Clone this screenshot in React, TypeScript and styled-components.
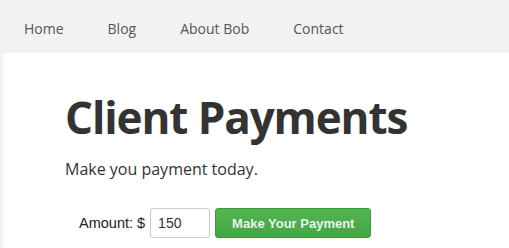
import React from "react"
import styled, { createGlobalStyle } from "styled-components"

const GlobalStyle = createGlobalStyle`
    html, body {
        margin: 0;
        padding: 0;
        background: #f2f2f2;
    }
    body {
        font-family: "Open Sans", "Liberation Sans", sans-serif;
    }
`

const links = ["Home", "Blog", "About Bob", "Contact"]

export default function App() {
    return (
        <>
            <GlobalStyle />
            <Page>
                <Nav>
                    {links.map((l) => (
                        <NavLink key={l} href="#">{l}</NavLink>
                    ))}
                </Nav>
                <Main>
                    <Title>Client Payments</Title>
                    <Lead>Make you payment today.</Lead>
                    <PayForm onSubmit={(e) => e.preventDefault()}>
                        <Label htmlFor="amount">Amount: $</Label>
                        <AmountInput id="amount" defaultValue="150" />
                        <PayButton type="submit">Make Your Payment</PayButton>
                    </PayForm>
                </Main>
            </Page>
        </>
    )
}

const Page = styled.div`
    display: flex;
    flex-direction: column;
    min-height: 248px;
`

const Nav = styled.nav`
    display: flex;
    align-items: center;
    box-sizing: border-box;
    height: 53px;
    padding: 4px 0 0 2px;
    background: #f2f2f2;
`

const NavLink = styled.a`
    padding: 0 22px;
    font-size: 14px;
    color: #555;
    text-decoration: none;
`

const Main = styled.main`
    flex: 1;
    margin-left: 3px;
    padding: 38px 0 0 62px;
    background: #fff;
`

const Title = styled.h1`
    margin: 0;
    font-size: 44px;
    line-height: 52px;
    letter-spacing: -1.1px;
    font-weight: 700;
    color: #333;
`

const Lead = styled.p`
    margin: 14px 0 0;
    font-size: 16px;
    line-height: 24px;
    color: #333;
`

const PayForm = styled.form`
    display: flex;
    align-items: center;
    margin: 27px 0 0 14px;
`

const Label = styled.label`
    margin-right: 5px;
    font-family: "Liberation Sans", Arial, sans-serif;
    font-size: 14.5px;
    color: #222;
`

const AmountInput = styled.input`
    box-sizing: border-box;
    width: 60px;
    height: 30px;
    margin-right: 5px;
    padding: 0 7px;
    border: 1px solid #ccc;
    border-radius: 3px;
    font-family: "Liberation Sans", Arial, sans-serif;
    font-size: 14px;
    color: #333;
    outline: none;
`

const PayButton = styled.button`
    box-sizing: border-box;
    height: 30px;
    padding: 0 16px;
    border: 1px solid #3d9a3d;
    border-radius: 3px;
    background: linear-gradient(#52b552, #44a544);
    font-family: "Liberation Sans", Arial, sans-serif;
    font-size: 13px;
    font-weight: 700;
    color: #e8f5e8;
`
